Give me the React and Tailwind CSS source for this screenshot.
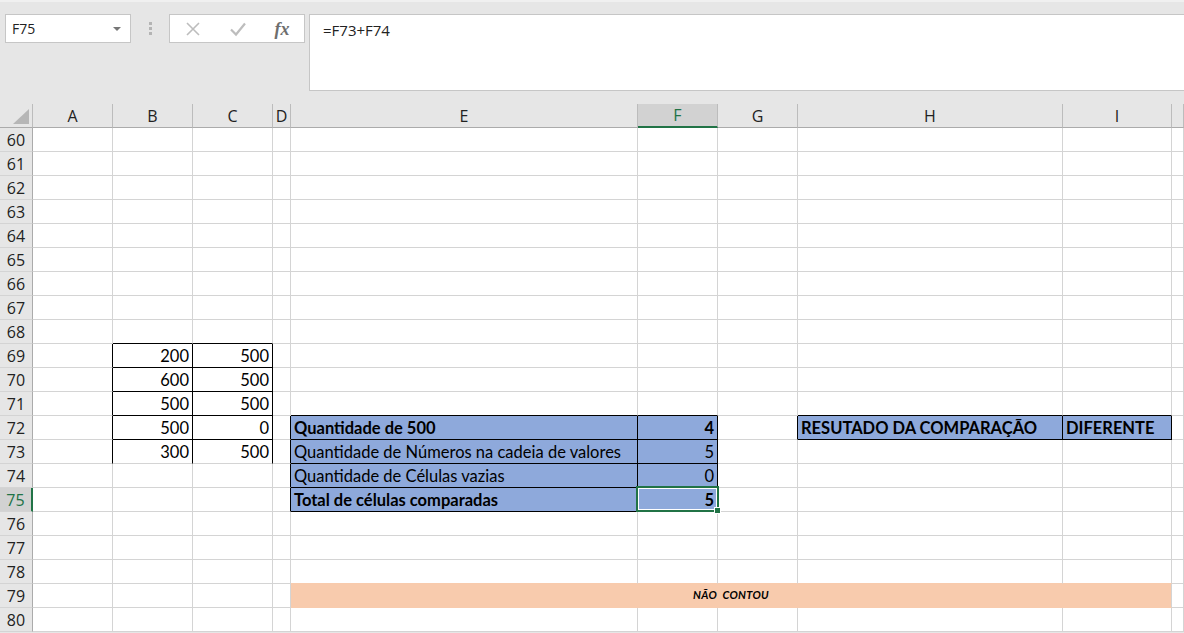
import React from 'react';

const COLS = ['A', 'B', 'C', 'D', 'E', 'F', 'G', 'H', 'I', ''];
const ROWS = Array.from({ length: 21 }, (_, i) => 60 + i);

// cell contents: [row][col] -> { v, right, bold }
const DATA = {
  69: { 1: { v: '200', right: true }, 2: { v: '500', right: true } },
  70: { 1: { v: '600', right: true }, 2: { v: '500', right: true } },
  71: { 1: { v: '500', right: true }, 2: { v: '500', right: true } },
  72: {
    1: { v: '500', right: true },
    2: { v: '0', right: true },
    4: { v: 'Quantidade de 500', bold: true },
    5: { v: '4', right: true, bold: true },
    7: { v: 'RESUTADO DA COMPARAÇÃO', bold: true },
    8: { v: 'DIFERENTE', bold: true },
  },
  73: {
    1: { v: '300', right: true },
    2: { v: '500', right: true },
    4: { v: 'Quantidade de Números na cadeia de valores' },
    5: { v: '5', right: true },
  },
  74: {
    4: { v: 'Quantidade de Células vazias' },
    5: { v: '0', right: true },
  },
  75: {
    4: { v: 'Total de células comparadas', bold: true },
    5: { v: '5', right: true, bold: true },
  },
};

const isBlue = (r, c) =>
  (r >= 72 && r <= 75 && (c === 4 || c === 5)) || (r === 72 && (c === 7 || c === 8));

const blackBottom = (r, c) =>
  ((c === 1 || c === 2) && r >= 68 && r <= 72) ||
  ((c === 4 || c === 5) && r >= 71 && r <= 75) ||
  ((c === 7 || c === 8) && r >= 71 && r <= 72);

const blackRight = (r, c) =>
  (r >= 69 && r <= 73 && c <= 2) ||
  (r >= 72 && r <= 75 && c >= 3 && c <= 5) ||
  (r === 72 && c >= 6 && c <= 8);

const orangeTop = (r, c) => r === 78 && c >= 4 && c <= 8;

function Cell({ r, c }) {
  const d = DATA[r]?.[c];
  const bottom = blackBottom(r, c)
    ? 'border-b-black'
    : orangeTop(r, c)
    ? 'border-b-[#f8cbad]'
    : 'border-b-[#d4d4d4]';
  const right = blackRight(r, c) ? 'border-r-black' : 'border-r-[#d4d4d4]';
  const bg = isBlue(r, c) ? 'bg-[#8ea9db]' : 'bg-white';
  const selected = r === 75 && c === 5;
  return (
    <div
      className={`relative h-[24px] border-r border-b ${bottom} ${right} ${bg} flex items-end pb-[1px] text-[16.5px] leading-[20px] text-black whitespace-nowrap ${
        d?.right ? 'justify-end pr-[3px]' : 'pl-[3px]'
      } ${d?.bold ? 'font-bold' : ''} ${selected ? 'z-10' : ''}`}
    >
      {d?.v}
      {selected && (
        <>
          <div className="absolute left-[-2px] top-[-2px] right-[-2px] bottom-[-1px] border-2 border-[#217346]">
            <div className="w-full h-full border border-white" />
          </div>
          <div className="absolute right-[-4px] bottom-[-3px] w-[7px] h-[7px] bg-[#217346] border border-white" />
        </>
      )}
    </div>
  );
}

const headFont = { fontFamily: '"Open Sans", "Noto Sans", sans-serif' };

export default function App() {
  return (
    <div className="w-[1184px] h-[633px] bg-[#e6e6e6] overflow-hidden" style={{ fontFamily: 'Lato, "Open Sans", sans-serif' }}>
      {/* formula bar area */}
      <div className="h-[104px] border-t-2 border-t-[#f0f0f0] pt-[12px] flex items-start" style={headFont}>
        <div className="ml-[5px] w-[126px] h-[29px] bg-white border border-[#c6c6c6] flex items-center justify-between pl-[6px] pr-[9px]">
          <span className="text-[14px] text-[#222]">F75</span>
          <span className="w-0 h-0 border-l-[4px] border-r-[4px] border-t-[4px] border-l-transparent border-r-transparent border-t-[#767676]" />
        </div>
        <div className="w-[38px] h-[29px] flex flex-col items-center justify-center gap-[2px]">
          <span className="w-[3px] h-[3px] bg-[#b4b4b4]" />
          <span className="w-[3px] h-[3px] bg-[#b4b4b4]" />
          <span className="w-[3px] h-[3px] bg-[#b4b4b4]" />
        </div>
        <div className="w-[136px] h-[29px] bg-white border border-[#c6c6c6] flex items-center">
          <div className="w-[45px] flex justify-center">
            <svg width="16" height="16" viewBox="0 0 16 16">
              <path d="M2 2 L14 14 M14 2 L2 14" stroke="#bdbdbd" strokeWidth="1.6" fill="none" />
            </svg>
          </div>
          <div className="w-[45px] flex justify-center">
            <svg width="18" height="16" viewBox="0 0 18 16">
              <path d="M2 8.5 L7 13.5 L16 2.5" stroke="#bdbdbd" strokeWidth="2.2" fill="none" />
            </svg>
          </div>
          <div className="flex-1 flex justify-center">
            <span className="italic font-bold text-[18px] text-[#6e6e6e] leading-none" style={{ fontFamily: '"Liberation Serif", serif' }}>
              fx
            </span>
          </div>
        </div>
        <div className="ml-[4px] flex-1 h-[77px] bg-white border border-r-0 border-[#c6c6c6] pl-[13px] pt-[4px] text-[15px] text-[#222]">
          =F73+F74
        </div>
      </div>

      {/* sheet grid */}
      <div className="grid grid-cols-[33px_80px_80px_80px_18px_347px_80px_80px_265px_109px_12px]">
        {/* header row */}
        <div className="relative h-[24px] border-r border-b border-r-[#bcbcbc] border-b-[#ababab] bg-[#e6e6e6]">
          <svg className="absolute left-[13px] top-[5px]" width="16" height="15" viewBox="0 0 16 15">
            <polygon points="16,0 16,15 0,15" fill="#b6b6b6" />
          </svg>
        </div>
        {COLS.map((c, i) =>
          c === 'F' ? (
            <div
              key={i}
              className="h-[24px] border-r border-r-[#bcbcbc] border-b-2 border-b-[#217346] bg-[#d2d2d2] flex items-center justify-center text-[16px] text-[#217346]"
              style={headFont}
            >
              {c}
            </div>
          ) : (
            <div
              key={i}
              className="h-[24px] border-r border-b border-r-[#bcbcbc] border-b-[#ababab] bg-[#e6e6e6] flex items-center justify-center text-[16px] text-[#222]"
              style={headFont}
            >
              {c}
            </div>
          )
        )}

        {ROWS.map((r) => (
          <React.Fragment key={r}>
            {r === 75 ? (
              <div
                className="h-[24px] border-r-2 border-b border-r-[#217346] border-b-[#d4d4d4] bg-[#d2d2d2] flex items-center justify-center text-[16px] text-[#217346]"
                style={headFont}
              >
                {r}
              </div>
            ) : (
              <div
                className="h-[24px] border-r border-b border-r-[#ababab] border-b-[#d4d4d4] bg-[#e6e6e6] flex items-center justify-center text-[16px] text-[#222]"
                style={headFont}
              >
                {r}
              </div>
            )}
            {r === 79 ? (
              <>
                {[0, 1, 2, 3].map((c) => (
                  <Cell key={c} r={r} c={c} />
                ))}
                <div className="col-span-5 h-[24px] border-r border-b border-r-[#d4d4d4] border-b-[#f8cbad] bg-[#f8cbad] flex items-center justify-center">
                  <span className="text-[11px] font-bold italic text-black whitespace-pre tracking-[0.3px]">NÃO  CONTOU</span>
                </div>
                <Cell r={r} c={9} />
              </>
            ) : (
              COLS.map((_, c) => <Cell key={c} r={r} c={c} />)
            )}
          </React.Fragment>
        ))}
      </div>
    </div>
  );
}
